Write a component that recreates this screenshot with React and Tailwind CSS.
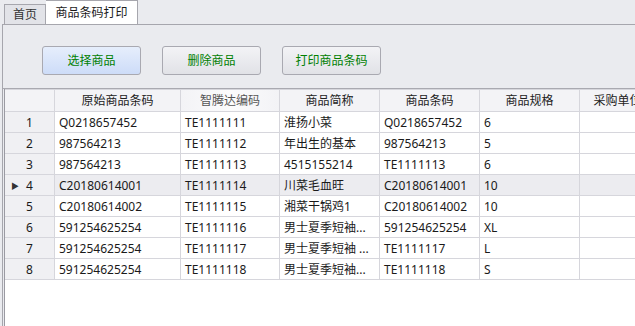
import React from 'react';

const font = { fontFamily: '"Noto Sans", "Noto Sans CJK SC", sans-serif' };

const columns = ['原始商品条码', '智腾达编码', '商品简称', '商品条码', '商品规格', '采购单位'];

const rows = [
  ['Q0218657452', 'TE1111111', '淮扬小菜', 'Q0218657452', '6'],
  ['987564213', 'TE1111112', '年出生的基本', '987564213', '5'],
  ['987564213', 'TE1111113', '4515155214', 'TE1111113', '6'],
  ['C20180614001', 'TE1111114', '川菜毛血旺', 'C20180614001', '10'],
  ['C20180614002', 'TE1111115', '湘菜干锅鸡1', 'C20180614002', '10'],
  ['591254625254', 'TE1111116', '男士夏季短袖...', '591254625254', 'XL'],
  ['591254625254', 'TE1111117', '男士夏季短袖 ...', 'TE1111117', 'L'],
  ['591254625254', 'TE1111118', '男士夏季短袖...', 'TE1111118', 'S'],
];

const buttons = [
  { label: '选择商品', active: true },
  { label: '删除商品' },
  { label: '打印商品条码' },
];

const App = () => {
  return (
    <div className="w-[635px] h-[326px] overflow-hidden bg-[#eaebef] flex flex-col text-[12px] text-[#1a1a1a]" style={font}>
      {/* tabs */}
      <div className="h-[24px] flex items-end pl-[4px] shrink-0">
        <div className="h-[20px] w-[42px] border border-b-0 border-[#a6a6ad] bg-[#e2e3e8] flex items-center justify-center text-[#333]">首页</div>
        <div className="h-[24px] w-[92px] border border-b-0 border-l-0 border-[#a6a6ad] bg-white flex items-center justify-center">商品条码打印</div>
      </div>

      <div className="flex-1 ml-[2px] border-l border-t border-[#a6a6ad] flex flex-col min-h-0">
        {/* toolbar */}
        <div className="h-[64px] shrink-0 pl-[39px] pt-[21px] flex items-start gap-[21px] border-b border-[#a9a9b0]">
          {buttons.map((b) => (
            <button
              key={b.label}
              className={`w-[99px] h-[29px] rounded-[3px] border border-[#a9a9b1] text-[#008000] text-[12px] ${
                b.active ? 'bg-gradient-to-b from-[#e6eefc] to-[#cddcf8]' : 'bg-gradient-to-b from-[#f3f3f6] to-[#e1e2e7]'
              }`}
            >
              {b.label}
            </button>
          ))}
        </div>

        {/* grid */}
        <div className="flex-1 ml-[1px] border-l border-[#9a9aa2] bg-white overflow-hidden">
          <div className="grid grid-cols-[50px_126px_99px_100px_100px_100px_76px_100px] w-[751px]">
            <div className="h-[23px] bg-[#f3f3f6] border-r border-b border-t border-[#d6d6dc]" />
            {columns.map((c, i) => (
              <div
                key={c}
                className={`h-[23px] pt-px border-r border-b border-t border-[#d6d6dc] flex items-center justify-center whitespace-nowrap ${
                  i === 1 ? 'text-[#555] bg-gradient-to-r from-[#f3f3f6] via-[#fbfbfc] to-[#f3f3f6]' : 'text-[#222] bg-[#f3f3f6]'
                }`}
              >
                {c}
              </div>
            ))}
            <div className="h-[23px] bg-[#f3f3f6] border-b border-t border-[#d6d6dc]" />

            {rows.map((r, idx) => {
              const selected = idx === 3;
              const bg = selected ? 'bg-[#ececf0]' : 'bg-white';
              return (
                <React.Fragment key={idx}>
                  <div className="h-[21px] pt-px bg-[#f0f0f3] border-r border-b border-[#d6d6dc] flex items-center relative">
                    {selected && <span className="absolute left-[6px] text-[8px] text-[#333]">▶</span>}
                    <span className="w-full text-center">{idx + 1}</span>
                  </div>
                  {r.map((v, j) => (
                    <div key={j} className={`h-[21px] pt-px ${bg} border-r border-b border-[#d6d6dc] flex items-center pl-[4px] whitespace-nowrap overflow-hidden`}>
                      {v}
                    </div>
                  ))}
                  <div className={`h-[21px] ${bg} border-r border-b border-[#d6d6dc]`} />
                  <div className={`h-[21px] ${bg} border-b border-[#d6d6dc]`} />
                </React.Fragment>
              );
            })}
          </div>
        </div>
      </div>
    </div>
  );
};

export default App;
